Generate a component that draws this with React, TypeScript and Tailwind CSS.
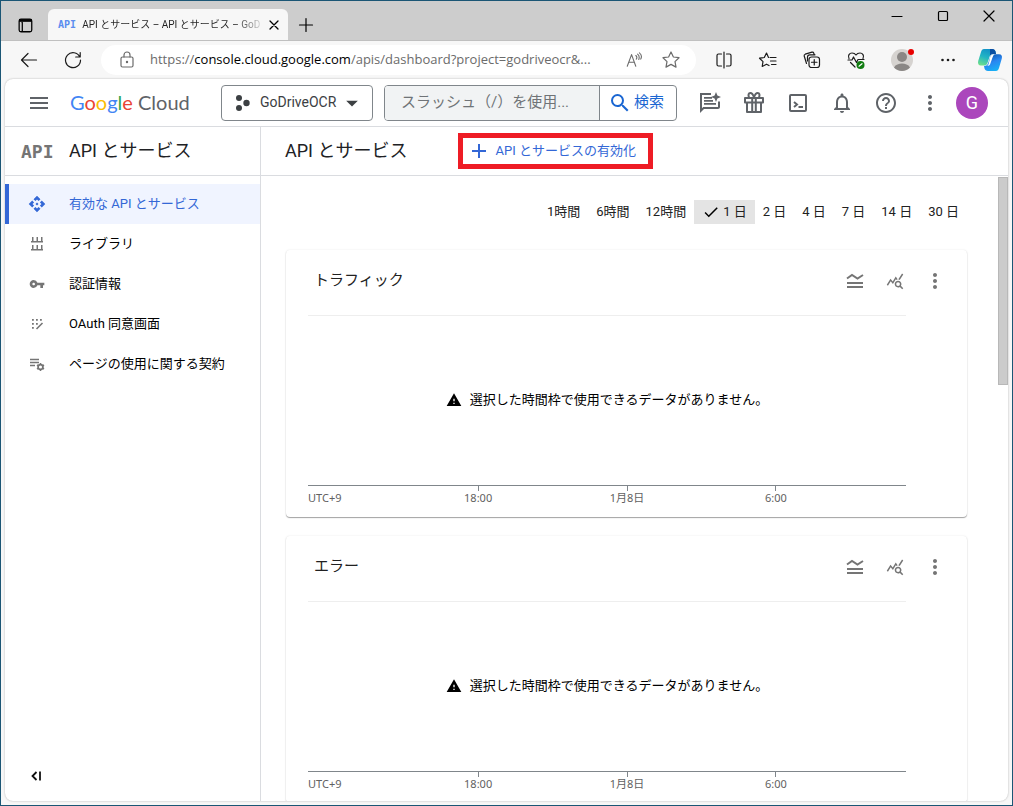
import type { ReactNode } from "react";
import {
  MdAdd,
  MdApi,
  MdArrowDropDown,
  MdCheck,
  MdHelpOutline,
  MdMenu,
  MdMoreVert,
  MdNotificationsNone,
  MdQueryStats,
  MdSearch,
  MdVpnKey,
  MdWarning,
} from "react-icons/md";

const navItems = [
  { label: "有効な API とサービス", icon: <MdApi size={18} />, active: true },
  { label: "ライブラリ", icon: <LibraryIcon /> },
  { label: "認証情報", icon: <MdVpnKey size={16} /> },
  { label: "OAuth 同意画面", icon: <ConsentIcon /> },
  { label: "ページの使用に関する契約", icon: <AgreementIcon /> },
];

const ranges = ["1時間", "6時間", "12時間", "1 日", "2 日", "4 日", "7 日", "14 日", "30 日"];

const charts = ["トラフィック", "エラー"];

function LibraryIcon() {
  return (
    <svg width="16" height="16" viewBox="0 0 16 16" fill="currentColor">
      <path d="M3 1h1.500v4h3V1H9v4h3V1h1.500v4H14v1.500H2V5h1zM3 9h1.500v4h3V9H9v4h3V9h1.500v4H14v1.500H2V13h1z" />
    </svg>
  );
}

function ConsentIcon() {
  return (
    <svg width="16" height="16" viewBox="0 0 16 16" fill="currentColor">
      <path d="M3 3h1.800v1.800H3zM7 3h1.800v1.800H7zM11 3h1.800v1.800H11zM3 7h1.800v1.800H3zM7 7h1.800v1.800H7zM3 11h1.800v1.800H3z" />
      <path d="m7.500 13 6-6" stroke="currentColor" strokeWidth="1.600" />
    </svg>
  );
}

function AgreementIcon() {
  return (
    <svg width="16" height="16" viewBox="0 0 16 16" fill="none" stroke="currentColor">
      <path d="M1 3.500h9M1 6.500h9M1 9.500h5" strokeWidth="1.500" />
      <circle cx="11.500" cy="11" r="2.400" strokeWidth="1.700" />
      <path d="M11.500 7v1.500M11.500 13.500V15M8 9l1.300.8M13.700 12.200l1.300.8M8 13l1.300-.8M13.700 9.800 15 9" strokeWidth="1.500" />
    </svg>
  );
}

function LineIcon({ children, size = 20 }: { children: ReactNode; size?: number }) {
  return (
    <svg
      width={size}
      height={size}
      viewBox="0 0 20 20"
      fill="none"
      stroke="currentColor"
      strokeWidth="1.2"
      strokeLinecap="round"
      strokeLinejoin="round"
    >
      {children}
    </svg>
  );
}

function CopilotIcon() {
  return (
    <svg width="26" height="26" viewBox="0 0 26 26">
      <defs>
        <linearGradient id="cpLeft" x1="0.6" y1="0" x2="0.2" y2="1">
          <stop offset="0" stopColor="#1290c8" />
          <stop offset="0.5" stopColor="#22b5c4" />
          <stop offset="1" stopColor="#6fe08a" />
        </linearGradient>
        <linearGradient id="cpRight" x1="0.2" y1="0" x2="0.6" y2="1">
          <stop offset="0" stopColor="#0c4fa8" />
          <stop offset="0.5" stopColor="#2a86f0" />
          <stop offset="1" stopColor="#17b1f5" />
        </linearGradient>
      </defs>
      <path d="M7 2h8c2 0 3 1 3.500 2.500L19 7h-3c-2 0-3 1-3.500 3l-2 6c-.6 1.700-1.600 2.500-3.500 2.500H4C1.500 18.500.500 16.500 1.200 14L4 5c.6-2 1.500-3 3-3z" fill="url(#cpLeft)" />
      <path d="M13 2h2.500c1.500 0 2.500 1 3 2.500L19 7h-3c-1.500 0-2.500.8-3 2z" fill="#0b4ea2" />
      <path d="M19 24h-8c-2 0-3-1-3.500-2.500L7 19c2.500 0 3.500-1 4.200-3l2-6c.6-2 1.600-2.800 3.500-2.800H22c2.500 0 3.500 1.800 2.800 4.300L22 21c-.6 2-1.500 3-3 3z" fill="url(#cpRight)" />
      <path d="M13.200 10c.6-2 1.600-2.800 3.500-2.800h1.500c-1.500.3-2 1.300-2.500 2.800l-2.500 7c-.6 1.600-1.600 1.800-3 1.800 1-.6 1.300-1.500 1.700-2.800z" fill="#fff" />
    </svg>
  );
}

function TitleBar() {
  return (
    <div className="flex h-10 shrink-0 border-b border-[#c0c0c0] bg-[#cdcdcd]">
      <button aria-label="タブ操作メニュー" className="flex w-[47px] items-center justify-center pt-2">
        <LineIcon size={18}>
          <rect x="3.500" y="3.500" width="14" height="14" rx="2" strokeWidth="1.400" />
          <path d="M3.500 5h14" strokeWidth="3" strokeLinecap="butt" />
          <path d="M7 7v10" strokeWidth="1.400" />
        </LineIcon>
      </button>
      <div className="mt-2 flex w-60 items-center rounded-t-md bg-[#f7f7f7] pl-[10px]">
        <span className="w-7 text-[10px] font-bold text-[#5b8def] font-['DejaVu_Sans_Mono',monospace]">API</span>
        <span className="flex-1 bg-linear-to-r from-[#222] from-85% to-[#d0d0d0] bg-clip-text text-[10px] whitespace-nowrap text-transparent">
          API とサービス – API とサービス – GoD
        </span>
        <button aria-label="タブを閉じる" className="flex w-8 items-center justify-center">
          <LineIcon size={16}>
            <path d="m5 5 10 10M15 5 5 15" strokeWidth="1.600" />
          </LineIcon>
        </button>
      </div>
      <button aria-label="新しいタブ" className="flex w-9 items-center justify-center pt-2">
        <LineIcon>
          <path d="M10 3.500v13M3.500 10h13" />
        </LineIcon>
      </button>
      <div className="ml-auto flex h-[30px]">
        <button aria-label="最小化" className="flex w-[46px] items-center justify-center">
          <LineIcon><path d="M5 10.500h10" /></LineIcon>
        </button>
        <button aria-label="最大化" className="flex w-[46px] items-center justify-center">
          <LineIcon><rect x="5.500" y="5.500" width="9" height="9" rx="1" /></LineIcon>
        </button>
        <button aria-label="閉じる" className="flex w-[46px] items-center justify-center">
          <LineIcon><path d="m5 5 10 10M15 5 5 15" /></LineIcon>
        </button>
      </div>
    </div>
  );
}

function ToolButton({ label, children }: { label: string; children: ReactNode }) {
  return (
    <button aria-label={label} className="flex h-9 w-11 shrink-0 items-center justify-center">
      {children}
    </button>
  );
}

function BrowserToolbar() {
  return (
    <div className="flex h-[38px] shrink-0 items-center bg-[#f7f7f7] pr-[2px] pl-[6px] text-[#1b1b1b]">
      <ToolButton label="戻る">
        <LineIcon><path d="M17.500 10h-15M9 3.500 2.500 10 9 16.500" /></LineIcon>
      </ToolButton>
      <ToolButton label="更新">
        <LineIcon>
          <path d="M16.800 7A7.500 7.500 0 1 0 17.500 10M17.200 2.500V7h-4.500" />
        </LineIcon>
      </ToolButton>
      <div className="ml-[6px] flex h-[30px] min-w-0 flex-1 items-center rounded-full bg-white pr-3 pl-4 text-[#6b6b6b]">
        <LineIcon>
          <rect x="4" y="7" width="12" height="10" rx="1.500" />
          <path d="M7 7V5a3 3 0 0 1 6 0v2" />
          <circle cx="10" cy="12" r="0.600" fill="currentColor" />
        </LineIcon>
        <a
          href="#"
          className="ml-[13px] min-w-0 flex-1 truncate text-[13px] font-['Open_Sans','Noto_Sans_CJK_JP',sans-serif]"
        >
          https://<span className="text-black">console.cloud.google.com</span>/apis/dashboard?project=godriveocr&...
        </a>
        <button aria-label="音声で読み上げる" className="mr-[6px] flex w-9 shrink-0 justify-center">
          <LineIcon size={18}>
            <path d="m2.500 17 4.800-13L12 17M4 12.500h6.500M12 5c1.200 1 1.200 3 .5 4M14 3.500c2 1.500 2 4 1.300 6M16 2c2.500 2 2.500 5 1.500 7" />
          </LineIcon>
        </button>
        <button aria-label="お気に入りに追加" className="flex w-[26px] shrink-0 justify-center">
          <LineIcon>
            <path d="m10 2 2.400 5 5.600.7-4 3.900 1 5.500-5-2.700-5 2.700 1-5.500-4-3.900 5.600-.7z" />
          </LineIcon>
        </button>
      </div>
      <div className="ml-[6px] flex shrink-0 items-center">
        <ToolButton label="画面を分割する">
          <LineIcon><path d="M7.500 4H4.500C3.500 4 3 4.500 3 5.500v9c0 1 .5 1.500 1.500 1.500h3M12.500 4h3c1 0 1.500.5 1.500 1.500v9c0 1-.5 1.500-1.500 1.500h-3M10 2v16" /></LineIcon>
        </ToolButton>
        <ToolButton label="お気に入り">
          <LineIcon><path d="M12 7.500h6M12.500 11H18M13.500 14.500H18M10.500 7.500 8.500 3 6.300 7.500l-4.800.7L5 11.600l-.8 4.900 4.300-2.300 2.500 1.300" /></LineIcon>
        </ToolButton>
        <ToolButton label="コレクション">
          <LineIcon>
            <rect x="7" y="7" width="10.500" height="10.500" rx="2.500" />
            <path d="M12.250 9.500v5.500M9.500 12.250H15M4.500 13.500 2.200 6C2 5 2.300 4.500 3.200 4.200L10 2.200c1-.2 1.500.1 1.800 1L12.300 4.500M5.500 11V7c0-1.500.7-2.200 2.200-2.200H13" />
          </LineIcon>
        </ToolButton>
        <ToolButton label="ブラウザーのエッセンシャル">
          <LineIcon>
            <path d="M3 8.500C1.500 5.500 3.500 3 6 3c2 0 3.300 1 4 2 .7-1 2-2 4-2 2.500 0 4.500 2.500 3 5.500M2 10h4l1.500-3 3 5.500L12 9.500h6M4.500 12.500 9 17" />
            <circle cx="14.500" cy="15" r="4" fill="#107c10" stroke="none" />
            <path d="m13 16.200 3-2.500" stroke="#fff" />
          </LineIcon>
        </ToolButton>
        <button aria-label="プロファイル" className="flex w-12 items-center justify-center">
          <svg width="26" height="26" viewBox="0 0 26 26">
            <circle cx="13" cy="13" r="11" fill="#d6d3d0" />
            <circle cx="13" cy="10" r="5" fill="#8a8785" />
            <path d="M5 20.500c1.500-3 5-4 8-4s6.500 1 8 4a11 11 0 0 1-16 0z" fill="#8a8785" />
            <circle cx="22" cy="5" r="3" fill="#e80000" />
          </svg>
        </button>
        <ToolButton label="設定など">
          <svg width="20" height="20" viewBox="0 0 20 20" fill="currentColor">
            <circle cx="4.500" cy="10" r="1.300" />
            <circle cx="10" cy="10" r="1.300" />
            <circle cx="15.500" cy="10" r="1.300" />
          </svg>
        </ToolButton>
        <button aria-label="Copilot" className="flex w-10 items-center justify-center">
          <CopilotIcon />
        </button>
      </div>
    </div>
  );
}

function CloudHeader() {
  return (
    <header className="flex h-12 shrink-0 items-center border-b border-[#dadce0] pr-5 pl-[22px] text-[#5f6368]">
      <button aria-label="メニュー" className="shrink-0">
        <MdMenu size={24} />
      </button>
      <a href="#" className="ml-[19px] w-[151px] shrink-0 pb-[2px] text-[20px] font-['Lato',sans-serif]">
        <span className="text-[#4285f4]">G</span>
        <span className="text-[#ea4335]">o</span>
        <span className="text-[#fbbc04]">o</span>
        <span className="text-[#4285f4]">g</span>
        <span className="text-[#34a853]">l</span>
        <span className="text-[#ea4335]">e</span> Cloud
      </a>
      <button className="flex h-9 w-[152px] shrink-0 items-center rounded border border-[#80868b] pl-3 text-[14px] text-[#3c4043]">
        <svg width="18" height="18" viewBox="0 0 18 18" fill="currentColor">
          <circle cx="5" cy="4" r="3" />
          <circle cx="12.500" cy="9" r="3.200" />
          <circle cx="5" cy="14" r="3" />
        </svg>
        <span className="ml-2">GoDriveOCR</span>
        <MdArrowDropDown size={28} className="ml-[2px]" />
      </button>
      <form className="ml-[11px] flex h-9 min-w-0 flex-1 overflow-hidden rounded border border-[#80868b]">
        <input
          type="text"
          aria-label="検索"
          placeholder="スラッシュ（/）を使用..."
          className="min-w-0 flex-1 bg-[#f1f3f4] pl-4 text-[15px] outline-none placeholder:text-[#6f7377]"
        />
        <button type="button" className="flex w-[77px] items-center border-l border-[#80868b] pl-2 text-[15px] text-[#1a66d2]">
          <MdSearch size={24} />
          <span className="ml-[2px]">検索</span>
        </button>
      </form>
      <div className="ml-[11px] flex shrink-0 items-center">
        <ToolButton label="Gemini">
          <svg width="24" height="24" viewBox="0 0 24 24" fill="currentColor">
            <path d="M2 2h11v2H4v13.200L5.200 16H20v-5.500h2V16c0 1.100-.9 2-2 2H6l-4 4z" />
            <path d="M6 6h8v1.800H6zM6 9h9v1.800H6zM6 12h12v1.800H6z" />
            <path d="m18 1 1.400 3.600L23 6l-3.600 1.400L18 11l-1.400-3.600L13 6l3.600-1.400z" />
          </svg>
        </ToolButton>
        <ToolButton label="無料トライアル">
          <svg width="24" height="24" viewBox="0 0 24 24" fill="none" stroke="currentColor" strokeWidth="2">
            <path d="M3 7h18v4.500H3zM5 11.500V21h14v-9.500M10.200 7v14M13.800 7v14" strokeLinejoin="round" />
            <path d="M12 6.500C11 3 9.500 2 8.300 2 6.500 2 6 4 7 6.500M12 6.500C13 3 14.500 2 15.700 2 17.500 2 18 4 17 6.500" />
          </svg>
        </ToolButton>
        <ToolButton label="Cloud Shell">
          <svg width="24" height="24" viewBox="0 0 24 24" fill="none" stroke="currentColor" strokeWidth="2">
            <rect x="4" y="4" width="16" height="16" rx="1" />
            <path d="m8 11 3 2.500L8 16M12.500 16H17" />
          </svg>
        </ToolButton>
        <ToolButton label="通知"><MdNotificationsNone size={24} /></ToolButton>
        <ToolButton label="ヘルプ"><MdHelpOutline size={24} /></ToolButton>
        <ToolButton label="設定とユーティリティ"><MdMoreVert size={24} /></ToolButton>
      </div>
      <button className="ml-1 size-8 shrink-0 rounded-full bg-[#ab47bc] text-[18px] text-white">G</button>
    </header>
  );
}

function Sidebar() {
  return (
    <aside className="flex w-64 shrink-0 flex-col border-r border-[#dadce0]">
      <div className="flex h-[49px] shrink-0 items-center border-b border-[#dadce0] pl-4">
        <span className="w-12 text-[18px] font-bold text-[#757575] font-['DejaVu_Sans_Mono',monospace]">API</span>
        <h2 className="pb-[2px] text-[18px] text-[#202124]">API とサービス</h2>
      </div>
      <nav className="mt-2 flex flex-col text-[13px]">
        {navItems.map((item) => (
          <a
            key={item.label}
            href="#"
            className={
              item.active
                ? "flex h-10 items-center border-l-4 border-[#3367d6] bg-[#f0f4ff] text-[#3367d6]"
                : "flex h-10 items-center border-l-4 border-transparent text-black"
            }
          >
            <span className={item.active ? "flex w-14 justify-center" : "flex w-14 justify-center text-[#757575]"}>
              {item.icon}
            </span>
            <span className="ml-1">{item.label}</span>
          </a>
        ))}
      </nav>
      <button aria-label="メニューを閉じる" className="mt-auto mb-4 ml-[23px] size-[18px]">
        <svg width="18" height="18" viewBox="0 0 18 18" fill="none" stroke="#111" strokeWidth="1.800">
          <path d="m8.500 5-4 4 4 4M12 4.500v9" />
        </svg>
      </button>
    </aside>
  );
}

function ChartCard({ title }: { title: string }) {
  return (
    <section className="shrink-0 rounded bg-white shadow-[0_1px_1px_rgba(0,0,0,0.35),0_0_2px_rgba(0,0,0,0.1)]">
      <div className="flex h-[65px] items-center pr-3 pb-[4px] pl-7 text-[#757575]">
        <h3 className="flex-1 text-[15px] text-[#212121]">{title}</h3>
        <button aria-label="凡例" className="flex w-10 justify-center">
          <svg width="18" height="18" viewBox="0 0 18 18" fill="none" stroke="currentColor" strokeWidth="2">
            <path d="M1 11h16M1 15h16M1 6.500 6 3l5.500 3.500L17 3" />
          </svg>
        </button>
        <button aria-label="Metrics Explorer で表示" className="flex w-10 justify-center">
          <MdQueryStats size={18} />
        </button>
        <button aria-label="その他" className="flex w-10 justify-center">
          <MdMoreVert size={24} />
        </button>
      </div>
      <div className="mr-[61px] ml-[22px]">
        <div className="flex h-[170px] items-center justify-center border-t border-[#eeeeee] pb-[2px] text-[13px] text-black">
          <MdWarning size={16} />
          <p className="ml-2">選択した時間枠で使用できるデータがありません。</p>
        </div>
        <div className="grid h-8 grid-cols-[160fr_249fr_249fr_249fr_93fr] border-t border-[#80868b] text-[11px] leading-[14px] text-[#616161] font-['Noto_Sans','Noto_Sans_CJK_JP',sans-serif]">
          <span className="pt-[5px]">UTC+9</span>
          {["18:00", "1月8日", "6:00"].map((tick) => (
            <div key={tick} className="flex flex-col items-center">
              <span className="h-[5px] w-px bg-[#80868b]" />
              {tick}
            </div>
          ))}
        </div>
      </div>
    </section>
  );
}

export default function App() {
  return (
    <div className="flex h-screen flex-col overflow-hidden border border-[#1b5675] bg-[#f7f7f7] text-black font-[Roboto,'Noto_Sans_CJK_JP',sans-serif]">
      <TitleBar />
      <BrowserToolbar />
      <div className="mx-1 mb-1 flex min-h-0 flex-1 flex-col overflow-hidden rounded-lg bg-white shadow-[0_0_2px_rgba(0,0,0,0.3)]">
        <CloudHeader />
        <div className="flex min-h-0 flex-1">
          <Sidebar />
          <main className="flex min-w-0 flex-1 flex-col">
            <div className="flex h-[49px] shrink-0 items-center border-b border-[#dadce0] pl-6">
              <h1 className="pb-[2px] text-[18px] text-[#202124]">API とサービス</h1>
              <button className="ml-[51px] flex h-9 items-center border-[5px] border-[#ee1c25] pr-3 pl-1 text-[13px] text-[#3367d6]">
                <MdAdd size={24} />
                <span className="ml-1">API とサービスの有効化</span>
              </button>
            </div>
            <div className="flex min-h-0 flex-1">
              <div className="flex min-w-0 flex-1 flex-col gap-[19px] overflow-hidden pt-6 pr-[31px] pl-[25px]">
                <div className="mb-[7px] flex h-6 shrink-0 justify-end text-[13px] text-[#212121]">
                  {ranges.map((range) => (
                    <button
                      key={range}
                      className={range === "1 日" ? "flex items-center bg-[#e4e4e4] px-2" : "flex items-center px-2"}
                    >
                      {range === "1 日" && <MdCheck size={18} className="mr-[3px] text-black" />}
                      {range}
                    </button>
                  ))}
                </div>
                {charts.map((title) => (
                  <ChartCard key={title} title={title} />
                ))}
              </div>
              <div className="w-[10px] shrink-0 pt-px">
                <div className="h-1/3 border border-[#b8b8b8] bg-[#cbcbcb]" />
              </div>
            </div>
          </main>
        </div>
      </div>
    </div>
  );
}
